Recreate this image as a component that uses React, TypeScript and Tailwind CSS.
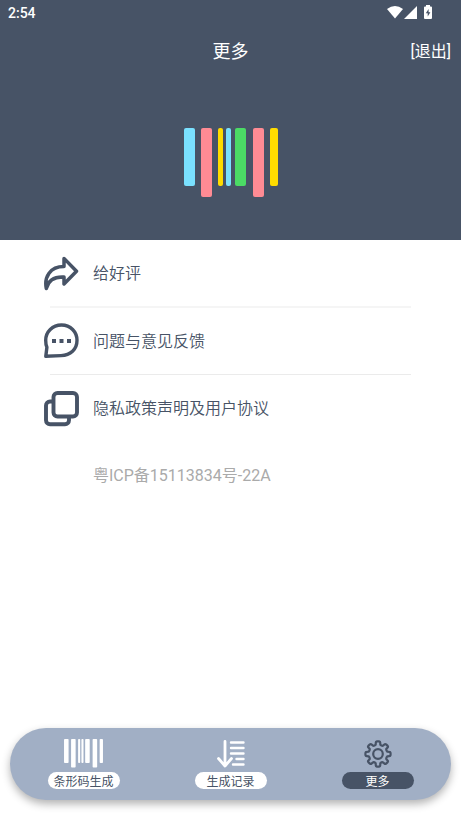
import React from "react";

type BarcodeProps = { className: string; colors: string[] };

const bars = [
  { x: 0, w: 11, h: 58 },
  { x: 17, w: 11, h: 69 },
  { x: 34, w: 5, h: 58 },
  { x: 42, w: 5, h: 58 },
  { x: 51, w: 11, h: 58 },
  { x: 69, w: 11, h: 69 },
  { x: 86, w: 8, h: 58 },
];

function Barcode({ className, colors }: BarcodeProps) {
  return (
    <svg viewBox="0 0 94 70" className={className} aria-hidden="true">
      {bars.map((bar, i) => (
        <rect key={bar.x} x={bar.x} y="0" width={bar.w} height={bar.h} rx="2" fill={colors[i % colors.length]} />
      ))}
    </svg>
  );
}

function ShareIcon() {
  return (
    <svg viewBox="0 0 36 36" className="size-9" fill="none" stroke="currentColor" strokeWidth="3.5" aria-hidden="true">
      <path d="M21 2.400 L33.500 15.200 L21 28 V21 C12 20.500 5.500 23.500 3.300 32.500 C1 21 7 10.500 21 10.500 Z" strokeLinejoin="round" />
    </svg>
  );
}

function FeedbackIcon() {
  return (
    <svg viewBox="0 1 36 36" className="size-9 overflow-visible" aria-hidden="true">
      <path
        d="M18.500 2 C27.500 2 34 8.800 34 17.300 C34 26.500 27.500 32.300 18 32.600 L2.800 33.300 L3.900 24.300 C3 22.300 2.700 19.800 2.700 17.300 C2.700 8.800 9.500 2 18.500 2 Z"
        fill="none"
        stroke="currentColor"
        strokeWidth="3.4"
        strokeLinejoin="round"
      />
      <path d="M9 16h4v4H9z M16.500 16h4v4h-4z M24 16h4v4h-4z" fill="currentColor" />
    </svg>
  );
}

function CopyIcon() {
  return (
    <svg viewBox="0 0 36 36" className="size-9" fill="none" stroke="currentColor" strokeWidth="3.9" aria-hidden="true">
      <rect x="10.500" y="2" width="23.500" height="23.500" rx="4" />
      <path d="M10.500 10.500 H7 a4 4 0 0 0 -4 4 V29.300 a4 4 0 0 0 4 4 H22 a4 4 0 0 0 4 -4 V26" />
    </svg>
  );
}

function SortIcon() {
  return (
    <svg viewBox="0 0 29 28" className="h-7 w-[29px]" fill="none" stroke="currentColor" strokeLinecap="round" strokeLinejoin="round" aria-hidden="true">
      <path d="M9 1.500 V26 M2.500 18.500 L9 26 L15.500 18.500" strokeWidth="2.800" />
      <path d="M15 2.500 H27.500 M15 8 H27.500 M15 13.500 H27.500 M20.500 19 H27.500 M17 24.500 H27.500" strokeWidth="2.400" />
    </svg>
  );
}

function gearPath() {
  const at = (radius: number, degrees: number) => {
    const a = (degrees * Math.PI) / 180;
    return `${(14 + radius * Math.cos(a)).toFixed(2)} ${(14 + radius * Math.sin(a)).toFixed(2)}`;
  };
  let d = "";
  for (let tooth = 0; tooth < 8; tooth++) {
    const c = tooth * 45;
    d += `${tooth === 0 ? "M" : "L"}${at(9.6, c - 14)} L${at(11.6, c - 11)} Q${at(12.6, c - 10)} ${at(12.6, c - 5)} L${at(12.6, c + 5)} Q${at(12.6, c + 10)} ${at(11.6, c + 11)} L${at(9.6, c + 14)} Q${at(8.8, c + 22.5)} ${at(9.6, c + 31)} `;
  }
  return d + "Z";
}

function GearIcon() {
  return (
    <svg viewBox="0 0 28 28" className="size-7" fill="none" stroke="currentColor" strokeWidth="2.2" strokeLinejoin="round" aria-hidden="true">
      <path d={gearPath()} />
      <circle cx="14" cy="14" r="4.800" />
    </svg>
  );
}

function StatusIcons() {
  return (
    <svg viewBox="0 0 46 15" className="h-[15px] w-[46px]" fill="#ffffff" aria-hidden="true">
      <path d="M0 4 Q8 -2 16 4 L8 13.500 Z" />
      <path d="M30 1 V14 H17 Z" />
      <path d="M39 0 h4 v1.500 h1 q1 0 1 1 V13 q0 1 -1 1 h-6 q-1 0 -1 -1 V2.500 q0 -1 1 -1 h1 z" />
      <path d="M41.600 4 L38.800 8.300 H40.700 V11.500 L43.400 7.200 H41.600 Z" fill="#475366" />
    </svg>
  );
}

type RowProps = { icon: React.ReactNode; label: string };

function MenuRow({ icon, label }: RowProps) {
  return (
    <button type="button" className="flex h-[66px] w-full items-center gap-[14px] px-[43px] pt-0.5 text-left">
      {icon}
      <span>{label}</span>
    </button>
  );
}

type TabProps = { icon: React.ReactNode; label: string; active?: boolean };

function Tab({ icon, label, active = false }: TabProps) {
  return (
    <button
      type="button"
      aria-current={active ? "page" : undefined}
      className={`flex flex-1 flex-col items-center gap-1 ${active ? "text-[#475366]" : "text-white"}`}
    >
      <span className="flex h-[29px] items-center">{icon}</span>
      <span className={`h-[17px] w-[72px] rounded-full text-xs leading-5 ${active ? "bg-[#475366] text-white" : "bg-white text-[#475366]"}`}>
        {label}
      </span>
    </button>
  );
}

export default function App() {
  return (
    <div className="flex min-h-screen flex-col bg-white font-[Roboto,'Noto_Sans_CJK_SC',sans-serif] text-base text-[#475366]">
      <header className="flex h-60 flex-col bg-[#475366] text-white">
        <div className="flex h-[25px] items-center justify-between pr-7 pl-2">
          <span className="text-sm font-medium">2:54</span>
          <StatusIcons />
        </div>
        <div className="grid h-[53px] grid-cols-3 items-center px-[10px]">
          <h1 className="col-start-2 text-center text-lg">更多</h1>
          <button type="button" className="justify-self-end">[退出]</button>
        </div>
        <div className="flex justify-center pt-[50px]">
          <Barcode className="h-[70px] w-[94px]" colors={["#7ae1ff", "#ff8b94", "#ffdc00", "#7ae1ff", "#4bdb65", "#ff8b94", "#ffdc00"]} />
        </div>
      </header>

      <main className="font-[350]">
        <MenuRow icon={<ShareIcon />} label="给好评" />
        <hr className="mx-[50px] border-t-2 border-[#f5f5f5]" />
        <MenuRow icon={<FeedbackIcon />} label="问题与意见反馈" />
        <hr className="mx-[50px] border-t border-[#ebebeb]" />
        <MenuRow icon={<CopyIcon />} label="隐私政策声明及用户协议" />
        <p className="flex h-[70px] items-center pl-[93px] font-normal text-[#aaaaaa]">粤ICP备15113834号-22A</p>
      </main>

      <nav className="mx-[10px] mt-auto mb-5 flex h-[72px] items-start rounded-full bg-[#a1afc5] pt-[11px] shadow-[0_4px_8px_rgba(0,0,0,0.3)]">
        <Tab icon={<Barcode className="h-[29px] w-[39px]" colors={["#ffffff"]} />} label="条形码生成" />
        <Tab icon={<SortIcon />} label="生成记录" />
        <Tab icon={<GearIcon />} label="更多" active />
      </nav>
    </div>
  );
}
